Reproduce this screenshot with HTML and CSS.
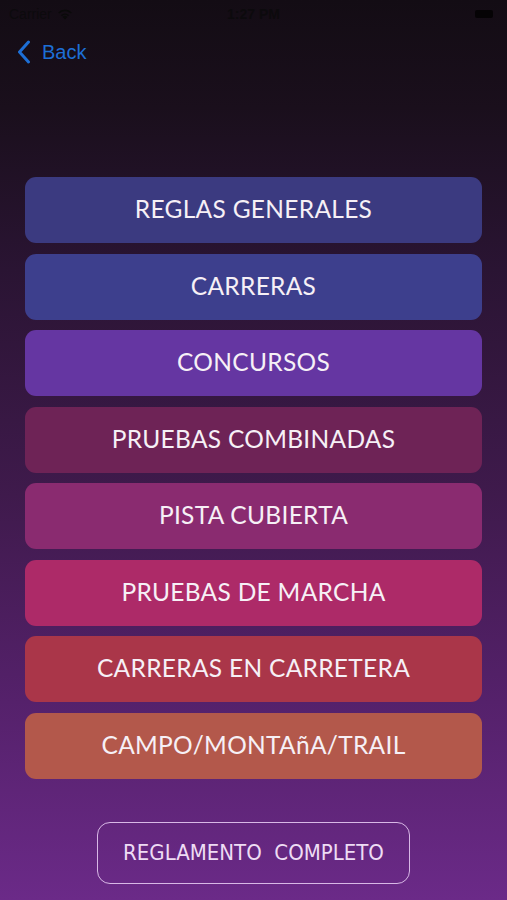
FILE: index.html
```html
<!DOCTYPE html>
<html lang="es">
<head>
  <meta charset="UTF-8" />
  <meta name="viewport" content="width=device-width, initial-scale=1.0" />
  <title>Reglamento</title>
  <link rel="stylesheet" href="styles.css">
</head>
<body>
  <div class="status-bar">
    <div class="carrier">
      Carrier
      <svg class="wifi" width="16" height="12" viewBox="0 0 16 12">
        <path d="M8 11.5 L5.6 8.9 A3.4 3.4 0 0 1 10.4 8.9 Z" fill="#0a0a0a"/>
        <path d="M3.9 7.1 A5.9 5.9 0 0 1 12.1 7.1 L11 8.3 A4.3 4.3 0 0 0 5 8.3 Z" fill="#0a0a0a"/>
        <path d="M1.2 4.4 A9.6 9.6 0 0 1 14.8 4.4 L13.7 5.6 A8 8 0 0 0 2.3 5.6 Z" fill="#0a0a0a"/>
      </svg>
    </div>
    <div class="time">1:27 PM</div>
    <div class="battery"></div>
  </div>

  <div class="nav">
    <svg class="chevron" width="14" height="24" viewBox="0 0 14 24">
      <path d="M11.5 2 L2.5 12 L11.5 22" fill="none" stroke="#1d6fd6" stroke-width="3" stroke-linecap="round" stroke-linejoin="round"/>
    </svg>
    <span>Back</span>
  </div>

  <div class="menu">
    <div class="item c1">REGLAS GENERALES</div>
    <div class="item c2">CARRERAS</div>
    <div class="item c3">CONCURSOS</div>
    <div class="item c4">PRUEBAS COMBINADAS</div>
    <div class="item c5">PISTA CUBIERTA</div>
    <div class="item c6">PRUEBAS DE MARCHA</div>
    <div class="item c7">CARRERAS EN CARRETERA</div>
    <div class="item c8">CAMPO/MONTAñA/TRAIL</div>
  </div>

  <div class="full">
    <div class="full-btn">REGLAMENTO&nbsp; COMPLETO</div>
  </div>
</body>
</html>
```

FILE: styles.css
```css
html, body {
  margin: 0;
  padding: 0;
}

body {
  width: 507px;
  height: 900px;
  overflow: hidden;
  font-family: Lato, 'Noto Sans', sans-serif;
  background: linear-gradient(180deg, #130c14 0%, #1a0f1c 12%, #2a1433 30%, #3f1a4c 55%, #55216b 78%, #6b2a88 100%);
  color: #fff;
}

.status-bar {
  height: 28px;
  display: flex;
  align-items: center;
  justify-content: space-between;
  padding: 0 14px 0 9px;
  font-family: 'Liberation Sans', sans-serif;
  font-size: 14px;
  color: #0c0a0d;
  position: relative;
}

.carrier {
  display: flex;
  align-items: center;
  gap: 5px;
}

.time {
  font-weight: bold;
  position: absolute;
  left: 0;
  right: 0;
  text-align: center;
  top: 6px;
}

.battery {
  width: 18px;
  height: 8px;
  background: #050305;
  border-radius: 2px;
}

.nav {
  display: flex;
  align-items: center;
  gap: 11px;
  padding: 10px 0 0 17px;
  height: 28px;
  font-family: 'Liberation Sans', sans-serif;
  font-size: 20px;
  color: #1d6fd6;
}

.menu {
  display: flex;
  flex-direction: column;
  gap: 10.5px;
  margin: 111px 25px 0 25px;
}

.item {
  height: 66px;
  border-radius: 11px;
  display: flex;
  align-items: center;
  justify-content: center;
  font-size: 24.5px;
  letter-spacing: 0.3px;
  color: #f6f0f6;
  padding-bottom: 3px;
  box-sizing: border-box;
}

.c1 { background: #3b3a80; }
.c2 { background: #3d3f8d; }
.c3 { background: #6536a2; }
.c4 { background: #6e2356; }
.c5 { background: #8a2b70; }
.c6 { background: #ad2a68; }
.c7 { background: #aa3649; }
.c8 { background: #b3584b; }

.full {
  display: flex;
  justify-content: center;
  margin-top: 43px;
}

.full-btn {
  width: 313px;
  height: 62px;
  box-sizing: border-box;
  border: 1.5px solid #d8b8e6;
  border-radius: 13px;
  display: flex;
  align-items: center;
  justify-content: center;
  font-family: 'DejaVu Sans Condensed', 'DejaVu Sans', sans-serif;
  font-stretch: condensed;
  font-size: 22px;
  color: #eedcf4;
}
```
